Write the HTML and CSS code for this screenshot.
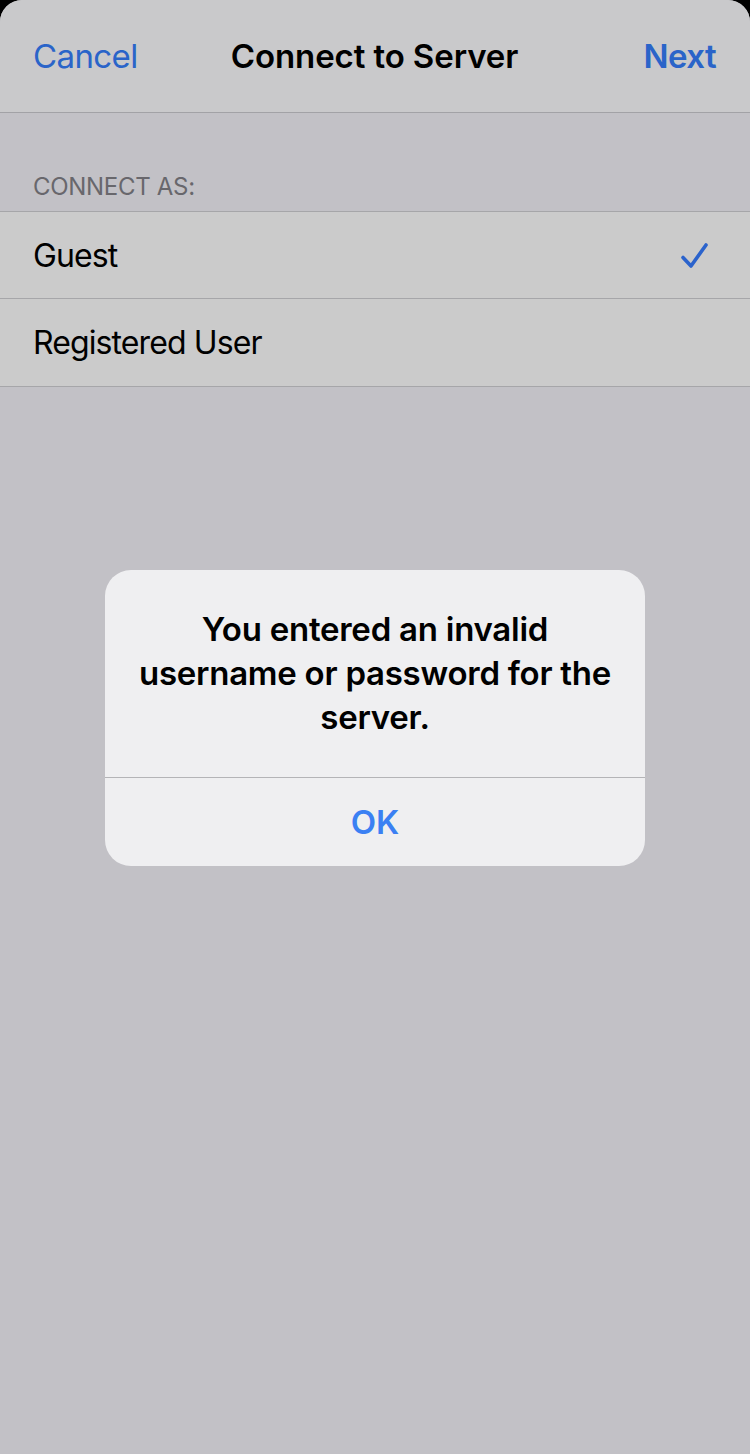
FILE: index.html
```html
<!DOCTYPE html>
<html>
<head>
<meta charset="utf-8">
<link rel="stylesheet" href="styles.css">
</head>
<body>
<div class="sheet">
  <header class="nav">
    <span class="nav-btn">Cancel</span>
    <span class="nav-title">Connect to Server</span>
    <span class="nav-btn nav-next">Next</span>
  </header>
  <div class="section-header">CONNECT AS:</div>
  <ul class="list">
    <li class="row">
      <span>Guest</span>
      <svg class="check" width="30" height="28" viewBox="0 0 30 28"><path d="M3 15.5 L11 24 L26 3" fill="none" stroke="#2b63cc" stroke-width="3.6" stroke-linecap="round" stroke-linejoin="round"/></svg>
    </li>
    <li class="row"><span>Registered User</span></li>
  </ul>
  <div class="overlay">
    <div class="alert">
      <div class="alert-msg">You entered an invalid username or password for the server.</div>
      <div class="alert-btn">OK</div>
    </div>
  </div>
</div>
</body>
</html>
```

FILE: styles.css
```css
html, body {
  margin: 0;
  padding: 0;
  background: #000;
}
body {
  font-family: Inter, "Noto Sans", sans-serif;
  -webkit-font-smoothing: antialiased;
}
.sheet {
  width: 750px;
  height: 1454px;
  background: #c2c1c6;
  border-radius: 22px 22px 0 0;
  overflow: hidden;
  display: flex;
  flex-direction: column;
}
.nav {
  height: 113px;
  box-sizing: border-box;
  border-bottom: 1px solid #a2a2a6;
  background: #c9c9cb;
  display: grid;
  grid-template-columns: 1fr auto 1fr;
  align-items: center;
  padding: 0 34px 0 33px;
}
.nav-btn {
  font-size: 33px;
  color: #2a64c9;
  letter-spacing: -0.6px;
}
.nav-next {
  font-weight: 600;
  justify-self: end;
}
.nav-title {
  font-size: 33px;
  font-weight: 600;
  color: #000;
  letter-spacing: -0.1px;
}
.section-header {
  height: 98px;
  box-sizing: border-box;
  padding: 59px 33px 0;
  font-size: 24px;
  color: #68676c;
  letter-spacing: -0.3px;
}
.list {
  list-style: none;
  margin: 0;
  padding: 0;
  background: #cbcbcb;
  border-top: 1px solid #a6a6a9;
  border-bottom: 1px solid #a6a6a9;
}
.row {
  height: 86px;
  display: flex;
  align-items: center;
  justify-content: space-between;
  padding: 0 40px 0 33px;
  font-size: 32px;
  color: #000;
  letter-spacing: -0.9px;
}
.row + .row {
  height: 87px;
  border-top: 1px solid #a6a6a9;
}
.check {
  display: block;
  margin-top: 2px;
}
.overlay {
  flex: 1;
  display: flex;
  justify-content: center;
  align-items: flex-start;
  padding-top: 183px;
}
.alert {
  width: 540px;
  background: #efeff1;
  border-radius: 26px;
  overflow: hidden;
}
.alert-msg {
  padding: 37px 20px 38px;
  text-align: center;
  font-size: 33px;
  font-weight: 600;
  line-height: 44px;
  color: #000;
  letter-spacing: -0.25px;
  border-bottom: 1px solid #b4b4b7;
}
.alert-btn {
  height: 88px;
  display: flex;
  align-items: center;
  justify-content: center;
  font-size: 33px;
  font-weight: 600;
  color: #3b80f3;
}
```
